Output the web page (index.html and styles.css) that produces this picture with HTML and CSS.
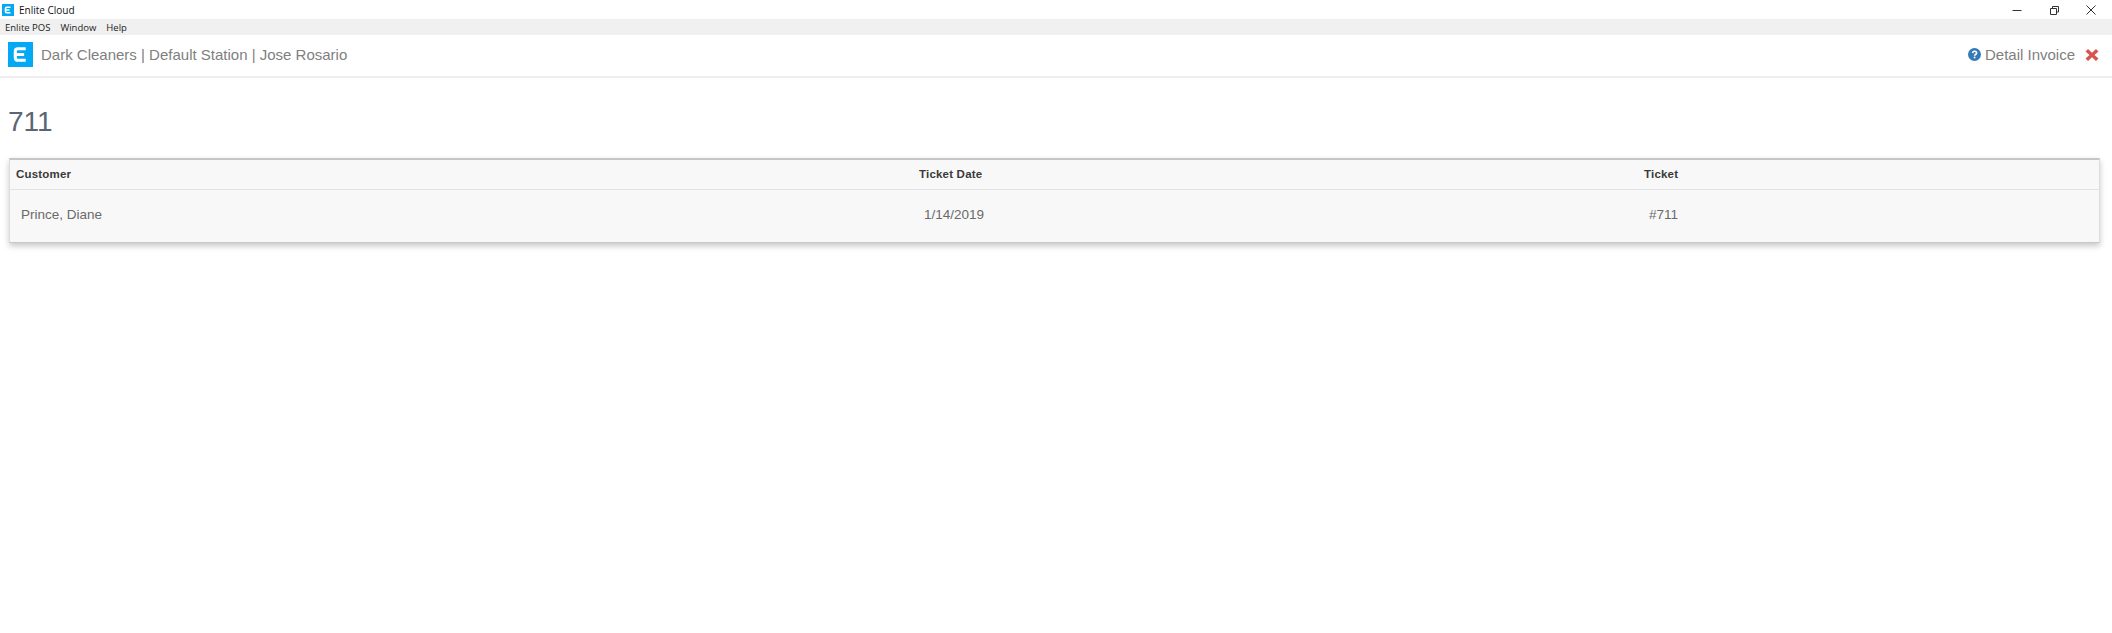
FILE: index.html
```html
<!DOCTYPE html>
<html lang="en">
<head>
<meta charset="utf-8">
<title>Enlite Cloud</title>
<link rel="stylesheet" href="styles.css">
</head>
<body>
<div class="titlebar">
  <div class="titlebar-left">
    <svg class="logo-small" viewBox="0 0 24 24"><rect width="24" height="24" fill="#03a9f4"/><path d="M17 6.500H9.500Q7 6.500 7 9V15Q7 17.500 9.500 17.500H17M8 12H15" fill="none" stroke="#fff" stroke-width="3.200"/></svg>
    <span>Enlite Cloud</span>
  </div>
  <div class="window-controls">
    <svg class="win-icon" viewBox="0 0 12 12"><path d="M1.500 6.500H10.500" stroke="#333" fill="none"/></svg>
    <svg class="win-icon" viewBox="0 0 12 12"><path d="M2.500 4.500H8.500V10.500H2.500ZM4.500 4V2.500H10.500V8H9" stroke="#333" fill="none"/></svg>
    <svg class="win-icon" viewBox="0 0 12 12"><path d="M1.500 1.500L10.500 10.500M10.500 1.500L1.500 10.500" stroke="#333" fill="none"/></svg>
  </div>
</div>
<nav class="menubar">
  <span>Enlite POS</span><span>Window</span><span>Help</span>
</nav>
<header class="appbar">
  <div class="brand">
    <svg class="logo" viewBox="0 0 24 24"><rect width="24" height="24" fill="#03a9f4"/><path d="M17 6.500H9.500Q7 6.500 7 9V15Q7 17.500 9.500 17.500H17M8 12H15.500" fill="none" stroke="#fff" stroke-width="3"/></svg>
    <span>Dark Cleaners | Default Station | Jose Rosario</span>
  </div>
  <div class="actions">
    <svg class="help" viewBox="0 0 14 14"><circle cx="7" cy="7" r="7" fill="#337ab7"/><path d="M4.900 5.500C5 4.200 5.900 3.500 7.100 3.500C8.400 3.500 9.300 4.300 9.300 5.400C9.300 7 7.100 6.900 7.100 8.300" fill="none" stroke="#fff" stroke-width="1.700"/><rect x="6.200" y="9.300" width="1.800" height="1.800" fill="#fff"/></svg>
    <span>Detail Invoice</span>
    <svg class="close" viewBox="0 0 14 14"><path d="M3 1L7 4.800L11 1L13.500 3.500L9.500 7L13.500 10.500L11 13L7 9.200L3 13L.5 10.500L4.500 7L.5 3.500Z" fill="#d9534f"/></svg>
  </div>
</header>
<main class="content">
  <h1>711</h1>
  <section class="card">
    <div class="row head">
      <div>Customer</div><div>Ticket Date</div><div>Ticket</div>
    </div>
    <div class="row body">
      <div>Prince, Diane</div><div>1/14/2019</div><div>#711</div>
    </div>
  </section>
</main>
</body>
</html>
```

FILE: styles.css
```css
* { box-sizing: border-box; }
html, body { margin: 0; padding: 0; background: #fff; }
body { width: 2112px; height: 633px; overflow: hidden; font-family: "Liberation Sans", Arial, sans-serif; }

.titlebar { height: 19px; display: flex; justify-content: space-between; align-items: center; background: #fff; }
.titlebar-left { display: flex; align-items: center; gap: 5px; padding-left: 2px; font: 10px "Open Sans", "Noto Sans", sans-serif; color: #111; }
.logo-small { width: 12px; height: 12px; display: block; }
.window-controls { display: flex; gap: 25px; padding-right: 15px; align-items: center; }
.win-icon { width: 12px; height: 12px; display: block; }

.menubar { height: 16px; background: #f0f0f0; display: flex; gap: 10px; padding-left: 5px; align-items: center; font: 9.500px "Open Sans", "Noto Sans", sans-serif; color: #222; }

.appbar { height: 43px; border-bottom: 2px solid #efefef; display: flex; justify-content: space-between; align-items: center; padding: 0 13px 2px 8px; font-size: 15px; color: #808080; }
.brand { display: flex; align-items: center; gap: 8px; }
.logo { width: 25px; height: 25px; display: block; }
.actions { display: flex; align-items: center; }
.help { width: 13px; height: 13px; margin-right: 4px; display: block; }
.close { width: 14px; height: 14px; margin-left: 10px; display: block; }

.content { padding: 0 12px 0 9px; }
h1 { margin: 0 0 0 -1px; padding-top: 28px; height: 80px; font-size: 28px; line-height: 32px; font-weight: 400; color: #5a6773; }

.card { height: 85px; background: #f8f8f8; border: 1px solid #ddd; border-top: 2px solid #c6c6c6; border-bottom-color: #c8c8c8; box-shadow: 0 3px 6px rgba(0,0,0,.22); }
.row { display: grid; grid-template-columns: 902px 725px 1fr; align-items: center; }
.head { height: 30px; padding-bottom: 2px; border-bottom: 1px solid #e3e3e3; font-size: 11.500px; font-weight: 700; color: #3a3a3a; letter-spacing: .2px; }
.head > div { padding-left: 7px; }
.head > div:first-child { padding-left: 6px; }
.body { height: 52px; padding-bottom: 3px; font-size: 13.500px; color: #6a6a6a; }
.body > div { padding-left: 12px; }
.body > div:first-child { padding-left: 11px; }
```
